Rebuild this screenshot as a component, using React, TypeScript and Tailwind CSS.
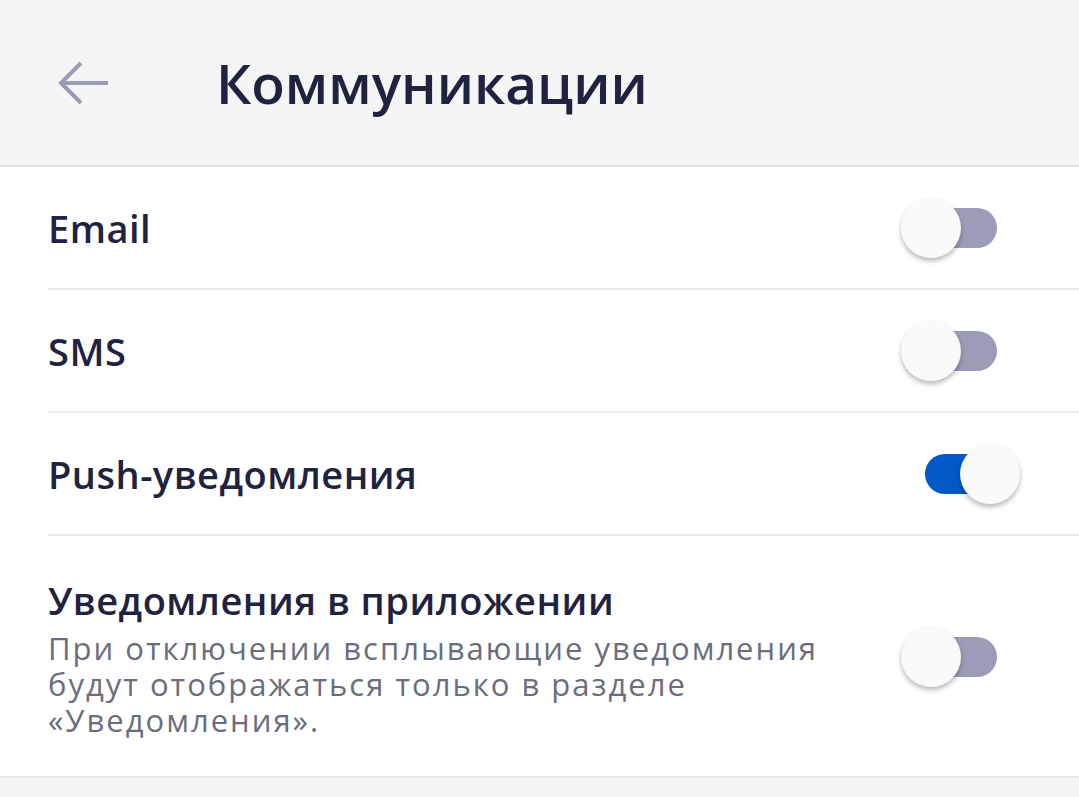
import React, { useState } from 'react';

type Item = {
  id: string;
  label: string;
  hint?: string;
  on: boolean;
};

const ITEMS: Item[] = [
  { id: 'email', label: 'Email', on: false },
  { id: 'sms', label: 'SMS', on: false },
  { id: 'push', label: 'Push-уведомления', on: true },
  {
    id: 'inapp',
    label: 'Уведомления в приложении',
    hint: 'При отключении всплывающие уведомления будут отображаться только в разделе «Уведомления».',
    on: false,
  },
];

function Toggle({ on, onClick }: { on: boolean; onClick: () => void }) {
  return (
    <button
      onClick={onClick}
      className={`relative w-[72px] h-[40px] shrink-0 rounded-full transition-colors ${on ? 'bg-[#0058c9]' : 'bg-[#9b9db8]'}`}
    >
      <span
        className={`absolute top-[-10px] w-[60px] h-[60px] rounded-full bg-[#fafafa] shadow-[0_3px_5px_rgba(0,0,0,0.28)] transition-all ${on ? 'left-[35px]' : 'left-[-24px]'}`}
      />
    </button>
  );
}

export default function App() {
  const [items, setItems] = useState(ITEMS);

  const flip = (id: string) =>
    setItems(items.map(i => (i.id === id ? { ...i, on: !i.on } : i)));

  return (
    <div className="w-[1079px] h-[797px] bg-[#f5f5f5] overflow-hidden font-['Open_Sans',sans-serif]">
      <header className="h-[167px] flex items-center border-b-2 border-[#e2e2e2] bg-[#f5f5f5]">
        <button className="ml-[56px] w-[54px] h-[46px] flex items-center">
          <svg width="54" height="46" viewBox="0 0 54 46" fill="none" stroke="#9a9cb6" strokeWidth="4">
            <path d="M52 23H5" />
            <path d="M25 3L5 23l20 20" />
          </svg>
        </button>
        <h1 className="ml-[106px] text-[55px] font-semibold text-[#1f2340] leading-none">
          Коммуникации
        </h1>
      </header>

      <div className="bg-white border-b-2 border-[#ebebeb]">
        {items.map((item, idx) => {
          const last = idx === items.length - 1;
          return (
            <div key={item.id} className="pl-12">
              <div
                className={`flex items-center justify-between pr-[82px] ${
                  item.hint ? 'h-[240px] pt-[2px]' : 'h-[123px]'
                } ${last ? '' : 'border-b-2 border-[#ebebeb]'}`}
              >
                <div>
                  <div className="text-[38px] font-semibold text-[#1f2340] leading-[48px] tracking-[0.5px]">
                    {item.label}
                  </div>
                  {item.hint && (
                    <p className="mt-[6px] w-[800px] text-[31px] text-[#6b6d7e] leading-[36px] tracking-[2px]">
                      {item.hint}
                    </p>
                  )}
                </div>
                <Toggle on={item.on} onClick={() => flip(item.id)} />
              </div>
            </div>
          );
        })}
      </div>
    </div>
  );
}
